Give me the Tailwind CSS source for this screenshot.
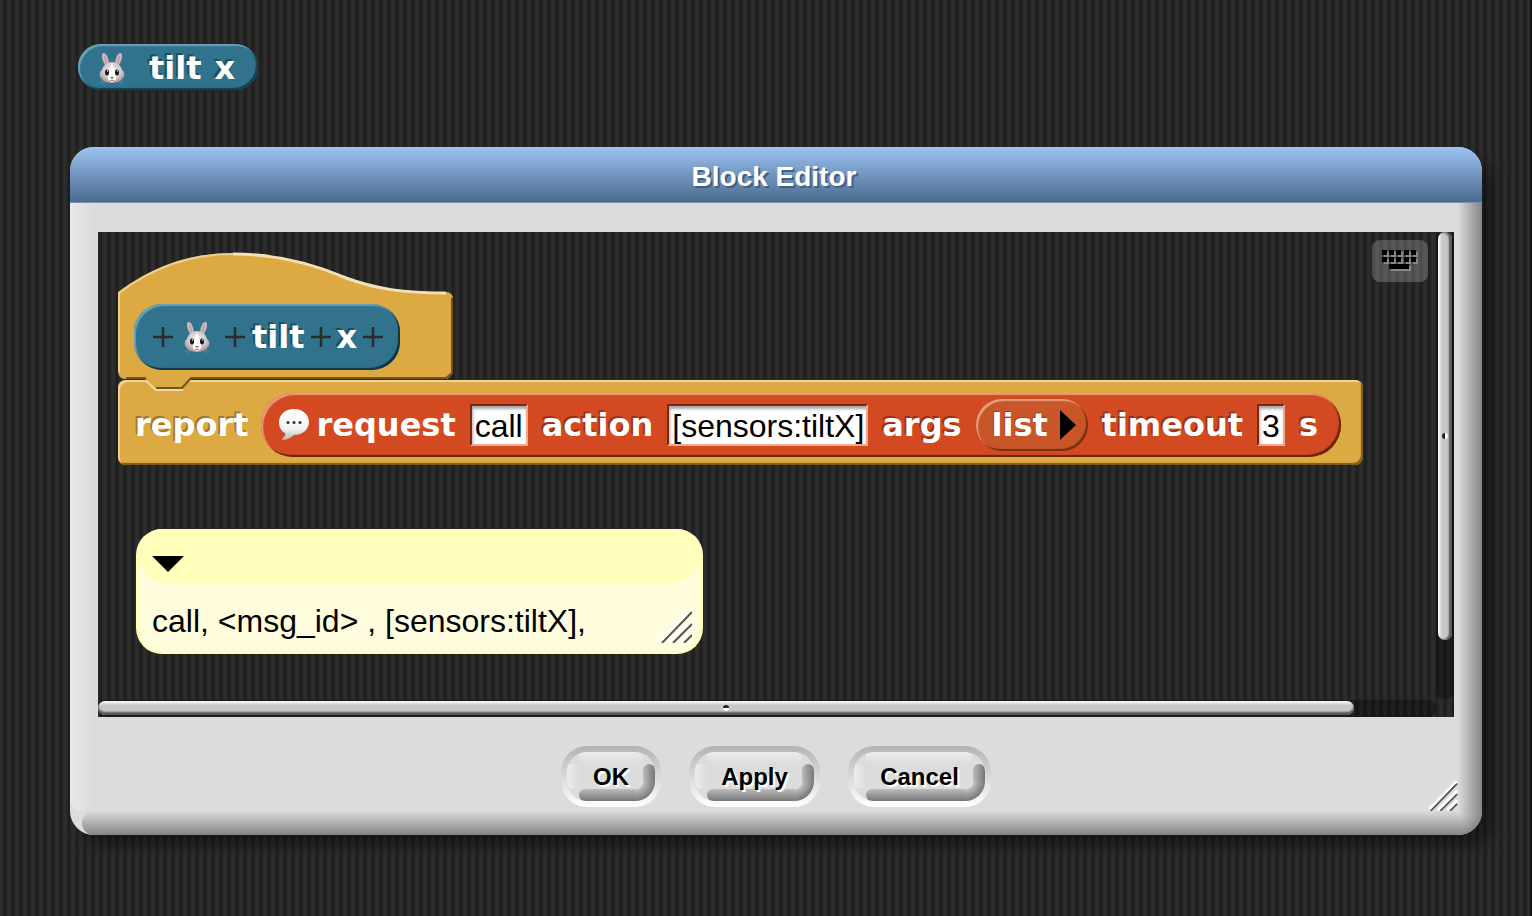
<!DOCTYPE html>
<html lang="en">
<head>
<meta charset="utf-8">
<title>Block Editor</title>
<script src="https://cdn.jsdelivr.net/npm/@tailwindcss/browser@4"></script>
</head>
<body class="min-h-screen border-r-2 border-[#111] bg-[#2b2b2b] bg-[repeating-linear-gradient(90deg,#2d2d2d_0px,#2d2d2d_2px,#282828_2px,#282828_4px,#1e1e1e_4px,#1e1e1e_6px,#282828_6px,#282828_8px)] pt-11 pb-20 font-['DejaVu_Sans',sans-serif] text-[32px] leading-9 font-bold text-white">

<svg class="absolute size-0">
  <defs>
    <radialGradient id="fur" cx=".5" cy=".4" r=".65"><stop offset="0" stop-color="#f4f0f2"/><stop offset=".6" stop-color="#cfc6c9"/><stop offset="1" stop-color="#98898e"/></radialGradient>
    <linearGradient id="bubble" x1="0" y1="0" x2="0" y2="1"><stop offset="0" stop-color="#fff"/><stop offset=".65" stop-color="#f3f3f3"/><stop offset="1" stop-color="#b5b5b5"/></linearGradient>
  </defs>
  <symbol id="rabbit" viewBox="0 0 28 32">
    <path d="M8 14C4 9 3 3 5 1c3-1 6 5 6 12zM20 14c4-5 5-11 3-13-3-1-6 5-6 12z" fill="#c9bec2"/>
    <path d="M8 12C6 8 5 4 6 3c2 0 3 5 4 9zM20 12c2-4 3-8 2-9-2 0-3 5-4 9z" fill="#cf9fa7"/>
    <path d="M14 10c6 0 9 4 10 8 3 2 3 6 1 8-2 4-7 5-11 5S5 30 3 26c-2-2-2-6 1-8 1-4 4-8 10-8z" fill="url(#fur)"/>
    <path d="M14 11c-2 4-2 8-4 12-1 5 2 7 4 7s5-2 4-7c-2-4-2-8-4-12z" fill="#fff"/>
    <ellipse cx="9" cy="20.500" rx="2" ry="3" fill="#171717"/><ellipse cx="19" cy="20.500" rx="2" ry="3" fill="#171717"/>
    <circle cx="9.500" cy="19" r=".7" fill="#fff"/><circle cx="19.500" cy="19" r=".7" fill="#fff"/>
    <path d="M12 25h4l-2 2z" fill="#b5455a"/><path d="M12 29q2-2 4 0" stroke="#a85566" fill="none"/>
    <path d="M5 29l-3 2M7 30l-3 2M23 29l3 2M21 30l3 2" stroke="#6d9aab" stroke-width=".7"/>
  </symbol>
  <symbol id="plus" viewBox="0 0 20 20"><path d="M10 0v20M0 10h20" stroke="#2b2b2b" stroke-width="2.500"/></symbol>
  <symbol id="grip" viewBox="0 0 32 34">
    <path d="M0 32L32 0M10 33L32 11M21 33L32 22" stroke="#fff" stroke-width="3"/>
    <path d="M2 34L32 3M13 34L32 15M24 34L32 26" stroke="#555" stroke-width="2"/>
  </symbol>
</svg>

<div class="ml-[78px] flex h-[46px] w-[180px] items-center rounded-full bg-[#31728d] pt-0.5 pl-5 shadow-[inset_2px_2px_1px_#69a2b8,inset_-2px_-2px_1px_#134054]">
  <svg class="h-8 w-7"><use href="#rabbit"/></svg>
  <span class="ml-[23px] [text-shadow:-2px_-2px_0_#1e4d60]">tilt</span>
  <span class="ml-[13px] [text-shadow:-2px_-2px_0_#1e4d60]">x</span>
</div>

<section aria-labelledby="title" class="relative mt-[57px] mr-12 ml-[70px] rounded-3xl bg-[#dcdcdc] shadow-[12px_12px_14px_rgba(0,0,0,0.35)]">
  <div class="absolute top-14 bottom-6 left-0 w-6 rounded-b-xl bg-linear-to-r from-[#e9e9e9] to-[#dcdcdc]"></div>
  <div class="absolute right-6 bottom-0 left-3 h-6 rounded-l-xl bg-linear-to-b from-[#dcdcdc] to-[#868686]"></div>
  <div class="absolute top-14 right-0 bottom-6 w-6 bg-linear-to-r from-[#dcdcdc] to-[#868686]"></div>
  <div class="absolute right-0 bottom-0 size-6 rounded-br-3xl bg-[radial-gradient(circle_at_0_0,#dcdcdc,#868686_24px)]"></div>

  <header class="flex h-14 items-center justify-center rounded-t-3xl border-b border-[#7890ac] bg-linear-to-b from-[#9cc4f2] to-[#4c6a8e]">
    <h1 id="title" class="pt-1 pr-1 font-['Liberation_Sans',sans-serif] text-[28px] [text-shadow:2px_2px_0_#43607f]">Block Editor</h1>
  </header>

  <div class="relative mx-7 mt-[29px] h-[485px] overflow-hidden bg-[#2b2b2b] bg-[repeating-linear-gradient(90deg,#282828_0px,#282828_2px,#1e1e1e_2px,#1e1e1e_4px,#282828_4px,#282828_6px,#2d2d2d_6px,#2d2d2d_8px)] pt-5 pl-5">
    <div class="relative z-10 h-32 w-[336px]">
      <svg class="absolute inset-0 h-[140px] w-[336px]" viewBox="0 0 336 140" fill="none">
        <path d="M0 40C38 12 75 1 115 1C160 1 200 13 228 25C258 36 285 40 329 40Q335 41 335 47V121L329 127H73L64 137H38L28 127H7Q1 127 0 120Z" fill="#dca943"/>
        <path d="M1 120V41C38 13 75 2 115 2" stroke="#ecd092" stroke-width="2"/>
        <path d="M115 2C160 2 200 14 228 26C258 37 285 41 328 41" stroke="#f2e0b6" stroke-width="3"/>
        <path d="M334 46V121L328 126H73L64 136H38M28 126H8" stroke="#735518" stroke-width="2"/>
        <path d="M27 128L38 138H65" stroke="#efd9a6" stroke-width="2"/>
      </svg>
      <div class="absolute top-[52px] left-4 flex h-[66px] w-[266px] items-center rounded-[28px] bg-[#31728d] pl-[19px] shadow-[inset_2px_2px_1px_#69a2b8,inset_-2px_-2px_1px_#0e3445]">
        <svg class="size-5"><use href="#plus"/></svg>
        <svg class="ml-2.5 h-8 w-7"><use href="#rabbit"/></svg>
        <svg class="ml-3.5 size-5"><use href="#plus"/></svg>
        <span class="ml-[7px] [text-shadow:-2px_-2px_0_#1e4d60]">tilt</span>
        <svg class="ml-1.5 size-5"><use href="#plus"/></svg>
        <span class="ml-1.5 [text-shadow:-2px_-2px_0_#1e4d60]">x</span>
        <svg class="ml-1.5 size-5"><use href="#plus"/></svg>
      </div>
    </div>

    <div class="flex h-[85px] w-max items-center rounded-lg bg-[#dca943] pt-1 pr-[22px] pl-[17px] shadow-[inset_2px_2px_1px_#f0d59a,inset_-2px_-2px_1px_#7c5b1a]">
      <span class="mr-[13px] [text-shadow:-2px_-2px_0_#a27a29]">report</span>
      <div class="flex h-16 items-center gap-3.5 rounded-full bg-[#d34a22] pr-[23px] pl-[18px] shadow-[inset_2px_2px_1px_#e99a80,inset_-2px_-2px_1px_#6b2008]">
        <div class="flex items-center gap-[7px]">
          <svg class="h-8 w-[30px]" viewBox="0 0 30 32"><path d="M15 0C24 0 30 6 30 13S24 26 15 26C13 28 8 31 4 31C3 31 3 30 4 29C6 27 7 25 6 24C2 22 0 18 0 13C0 6 6 0 15 0Z" fill="url(#bubble)"/><g fill="#333"><circle cx="9" cy="13.500" r="1.500"/><circle cx="15" cy="13.500" r="1.500"/><circle cx="21" cy="13.500" r="1.500"/></g></svg>
          <span>request</span>
        </div>
        <input aria-label="request" value="call" class="h-[42px] w-[58px] border-2 border-t-[#7a2810] border-r-[#efa98f] border-b-[#efa98f] border-l-[#7a2810] bg-white pt-1 pl-[3px] font-['Liberation_Sans',sans-serif] text-[32px] leading-8 font-normal text-black shadow-[inset_1px_3px_3px_#aaa]">
        <span class="[text-shadow:-2px_-2px_0_#9a3315]">action</span>
        <input aria-label="action" value="[sensors:tiltX]" class="h-[42px] w-[201px] border-2 border-t-[#7a2810] border-r-[#efa98f] border-b-[#efa98f] border-l-[#7a2810] bg-white pt-1 pl-[3px] font-['Liberation_Sans',sans-serif] text-[32px] leading-8 font-normal text-black shadow-[inset_1px_3px_3px_#aaa]">
        <span class="[text-shadow:-2px_-2px_0_#9a3315]">args</span>
        <div class="flex h-[52px] w-28 items-center rounded-full bg-[#c85628] pl-4 shadow-[inset_2px_2px_1px_#e3a083,inset_-2px_-2px_1px_#7a3010]">
          <span class="[text-shadow:-1px_-1px_0_#9a3f1b]">list</span>
          <button aria-label="Add list item" class="ml-3"><svg class="h-[30px] w-4" viewBox="0 0 16 30"><path d="M0 0L16 15L0 30Z"/></svg></button>
        </div>
        <span class="[text-shadow:-2px_-2px_0_#9a3315]">timeout</span>
        <input aria-label="timeout" value="3" class="h-[42px] w-7 border-2 border-t-[#7a2810] border-r-[#efa98f] border-b-[#efa98f] border-l-[#7a2810] bg-white pt-1 pl-[3px] font-['Liberation_Sans',sans-serif] text-[32px] leading-8 font-normal text-black shadow-[inset_1px_3px_3px_#aaa]">
        <span class="[text-shadow:-2px_-2px_0_#9a3315]">s</span>
      </div>
    </div>

    <div class="relative mt-16 ml-[18px] h-[125px] w-[567px] overflow-hidden rounded-[26px] border-x-[3px] border-b-[3px] border-[#ffffbb] bg-[#fffddd] font-['Liberation_Sans',sans-serif] text-[32px] font-normal text-black">
      <div class="flex h-[54px] items-center rounded-b-[26px] bg-[#ffffbb] pt-[15px] pl-[13px]">
        <button aria-label="Collapse comment"><svg class="h-4 w-8" viewBox="0 0 32 16"><path d="M0 0H32L16 16Z"/></svg></button>
      </div>
      <p class="mt-5 pl-[13px]">call, &lt;msg_id&gt; , [sensors:tiltX],</p>
      <svg class="absolute right-2 bottom-2 h-[34px] w-8"><use href="#grip"/></svg>
    </div>

    <button aria-label="Keyboard entry" class="absolute top-2 right-[26px] flex h-[42px] w-14 items-center justify-center rounded-lg bg-white/20">
      <svg class="h-[23px] w-[37px]" viewBox="0 0 37 23">
        <path transform="translate(2 2)" fill="#888" d="M0 0h5v5h-5zM7 0h5v5h-5zM14 0h5v5h-5zM22 0h5v5h-5zM29 0h5v5h-5zM0 7h5v5h-5zM7 7h5v5h-5zM14 7h5v5h-5zM22 7h5v5h-5zM29 7h5v5h-5zM7 14h20v5h-20z"/>
        <path fill="#000" d="M0 0h5v5h-5zM7 0h5v5h-5zM14 0h5v5h-5zM22 0h5v5h-5zM29 0h5v5h-5zM0 7h5v5h-5zM7 7h5v5h-5zM14 7h5v5h-5zM22 7h5v5h-5zM29 7h5v5h-5zM7 14h20v5h-20z"/>
      </svg>
    </button>

    <div class="absolute top-0 right-0 bottom-[18px] w-[18px] rounded-lg bg-black/30">
      <div class="ml-0.5 flex h-[408px] w-[14px] items-center justify-center rounded-full bg-linear-to-r from-white via-[#c8c8c8] via-30% to-[#c8c8c8] to-75% shadow-[inset_-3px_0_2px_#555]"><span class="size-1.5 rounded-full bg-linear-to-r from-[#222] from-50% to-white to-50%"></span></div>
    </div>
    <div class="absolute right-[18px] bottom-0 left-0 h-[17px] rounded-lg bg-black/30">
      <div class="mt-px mr-[82px] flex h-[14px] items-center justify-center rounded-full bg-linear-to-b from-white via-[#c8c8c8] via-30% to-[#c8c8c8] to-75% shadow-[inset_0_-3px_2px_#555]"><span class="size-1.5 rounded-full bg-linear-to-b from-[#222] from-50% to-white to-50%"></span></div>
    </div>
  </div>

  <footer class="flex justify-center gap-7 pt-[29px] pb-7 font-['Liberation_Sans',sans-serif] text-2xl text-black">
    <button class="rounded-[26px] bg-linear-to-b from-[#b4b4b4] to-white p-1.5">
      <span class="relative flex h-[49px] w-[88px] items-center justify-center overflow-hidden rounded-[20px] bg-[#dcdcdc]">
        <span class="absolute top-0 right-3 left-3 h-3 rounded-r-full bg-linear-to-b from-[#ececec] to-[#dcdcdc]"></span>
        <span class="absolute top-3 bottom-3 left-0 w-3 rounded-b-full bg-linear-to-r from-[#ececec] to-[#dcdcdc]"></span>
        <span class="absolute right-5 bottom-0 left-3 h-3 rounded-l-full bg-linear-to-b from-[#bcbcbc] to-[#777]"></span>
        <span class="absolute top-3 right-0 bottom-5 w-3 rounded-t-full bg-linear-to-r from-[#bcbcbc] to-[#777]"></span>
        <span class="absolute right-0 bottom-0 size-5 bg-[radial-gradient(circle_at_0_0,#dcdcdc_8px,#bcbcbc_9px,#777_20px)]"></span>
        <span class="relative [text-shadow:2px_2px_0_#fff]">OK</span>
      </span>
    </button>
    <button class="rounded-[26px] bg-linear-to-b from-[#b4b4b4] to-white p-1.5">
      <span class="relative flex h-[49px] w-[119px] items-center justify-center overflow-hidden rounded-[20px] bg-[#dcdcdc]">
        <span class="absolute top-0 right-3 left-3 h-3 rounded-r-full bg-linear-to-b from-[#ececec] to-[#dcdcdc]"></span>
        <span class="absolute top-3 bottom-3 left-0 w-3 rounded-b-full bg-linear-to-r from-[#ececec] to-[#dcdcdc]"></span>
        <span class="absolute right-5 bottom-0 left-3 h-3 rounded-l-full bg-linear-to-b from-[#bcbcbc] to-[#777]"></span>
        <span class="absolute top-3 right-0 bottom-5 w-3 rounded-t-full bg-linear-to-r from-[#bcbcbc] to-[#777]"></span>
        <span class="absolute right-0 bottom-0 size-5 bg-[radial-gradient(circle_at_0_0,#dcdcdc_8px,#bcbcbc_9px,#777_20px)]"></span>
        <span class="relative [text-shadow:2px_2px_0_#fff]">Apply</span>
      </span>
    </button>
    <button class="rounded-[26px] bg-linear-to-b from-[#b4b4b4] to-white p-1.5">
      <span class="relative flex h-[49px] w-[131px] items-center justify-center overflow-hidden rounded-[20px] bg-[#dcdcdc]">
        <span class="absolute top-0 right-3 left-3 h-3 rounded-r-full bg-linear-to-b from-[#ececec] to-[#dcdcdc]"></span>
        <span class="absolute top-3 bottom-3 left-0 w-3 rounded-b-full bg-linear-to-r from-[#ececec] to-[#dcdcdc]"></span>
        <span class="absolute right-5 bottom-0 left-3 h-3 rounded-l-full bg-linear-to-b from-[#bcbcbc] to-[#777]"></span>
        <span class="absolute top-3 right-0 bottom-5 w-3 rounded-t-full bg-linear-to-r from-[#bcbcbc] to-[#777]"></span>
        <span class="absolute right-0 bottom-0 size-5 bg-[radial-gradient(circle_at_0_0,#dcdcdc_8px,#bcbcbc_9px,#777_20px)]"></span>
        <span class="relative [text-shadow:2px_2px_0_#fff]">Cancel</span>
      </span>
    </button>
  </footer>
  <svg class="absolute right-6 bottom-6 h-[30px] w-[30px]"><use href="#grip"/></svg>
</section>
</body>
</html>
